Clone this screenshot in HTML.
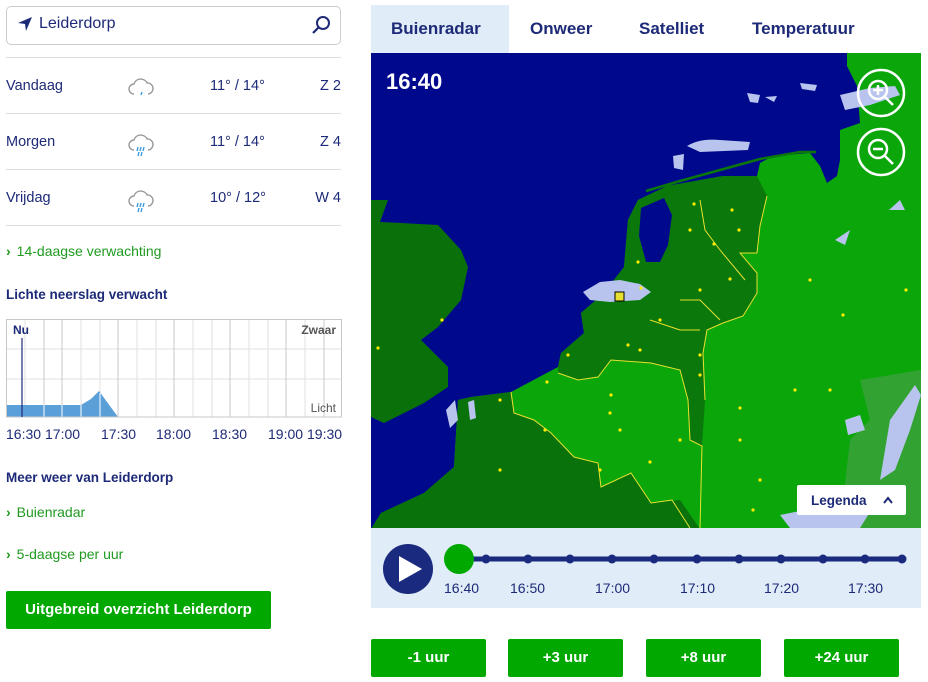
<!DOCTYPE html>
<html><head><meta charset="utf-8"><style>
*{box-sizing:border-box;margin:0;padding:0}
body{width:928px;height:682px;background:#fff;font-family:"Liberation Sans",sans-serif;color:#1d2a78;position:relative;overflow:hidden}
.a{position:absolute}
.row{position:absolute;left:6px;width:335px;height:56px;border-top:1px solid #ddd;font-size:14.5px}
.row span{position:absolute;top:20px}
.lnk{color:#1f9a1f;font-size:14px}
.lnk b{font-weight:bold;margin-right:6px}
.h{font-weight:bold;font-size:13.5px}
.tab{position:absolute;top:5px;height:48px;line-height:48px;font-weight:bold;font-size:17px;color:#1d2a78}
.btn{position:absolute;top:639px;height:38px;background:#00a800;color:#fff;font-weight:bold;font-size:15px;text-align:center;line-height:38px;border-radius:2px;width:115px}
.tl{position:absolute;top:580px;font-size:14px;color:#1d2a78}
.cl{position:absolute;top:426px;font-size:14px}
</style></head><body>
<div class="a" style="left:6px;top:6px;width:335px;height:39px;border:1px solid #ccc;border-radius:5px"></div>
<svg class="a" style="left:17px;top:16px" width="16" height="16" viewBox="0 0 16 16"><path d="M15 1 L1 7 L8 8 L9 15 Z" fill="#1d2a78"/></svg>
<div class="a" style="left:39px;top:15px;font-size:16px">Leiderdorp</div>
<svg class="a" style="left:311px;top:15px" width="20" height="20" viewBox="0 0 20 20"><circle cx="12" cy="8" r="6" fill="none" stroke="#1d2a78" stroke-width="2"/><path d="M7.5 12.5 L2 18" stroke="#1d2a78" stroke-width="2.2"/></svg>

<div class="row" style="top:57px"><span style="left:0">Vandaag</span><span style="left:204px">11° / 14°</span><span style="right:0">Z 2</span></div>
<div class="row" style="top:113px"><span style="left:0">Morgen</span><span style="left:204px">11° / 14°</span><span style="right:0">Z 4</span></div>
<div class="row" style="top:169px"><span style="left:0">Vrijdag</span><span style="left:204px">10° / 12°</span><span style="right:0">W 4</span></div>
<div class="a" style="left:6px;top:225px;width:335px;border-top:1px solid #ddd"></div>
<svg class="a" style="left:128px;top:76px" width="26" height="140" viewBox="0 0 26 140">
<g fill="none" stroke="#999" stroke-width="1.4">
<path d="M6 18 A5 5 0 0 1 6 8 A7 7 0 0 1 19 7 A5 5 0 0 1 20 18"/>
<path d="M6 74 A5 5 0 0 1 6 64 A7 7 0 0 1 19 63 A5 5 0 0 1 20 74"/>
<path d="M6 130 A5 5 0 0 1 6 120 A7 7 0 0 1 19 119 A5 5 0 0 1 20 130"/></g>
<g stroke="#3a9be0" stroke-width="1.4"><path d="M14 16 L13 19"/><path d="M10 71 L9 75 M13 71 L12 75 M16 71 L15 75 M11 76 L10 80 M14 76 L13 80"/><path d="M10 127 L9 131 M13 127 L12 131 M16 127 L15 131 M11 132 L10 136 M14 132 L13 136"/></g></svg>

<div class="a lnk" style="left:6px;top:243px"><b>›</b>14-daagse verwachting</div>
<div class="a h" style="left:6px;top:287px">Lichte neerslag verwacht</div>
<svg class="a" style="left:6px;top:319px" width="336" height="100" viewBox="0 0 336 100">
<g stroke="#e2e2e2" stroke-width="1">
<line x1="0" y1="30" x2="336" y2="30"/><line x1="0" y1="60" x2="336" y2="60"/>
<line x1="19" y1="0" x2="19" y2="98"/><line x1="75" y1="0" x2="75" y2="98"/><line x1="94" y1="0" x2="94" y2="98"/><line x1="131" y1="0" x2="131" y2="98"/><line x1="150" y1="0" x2="150" y2="98"/><line x1="187" y1="0" x2="187" y2="98"/><line x1="206" y1="0" x2="206" y2="98"/><line x1="243" y1="0" x2="243" y2="98"/><line x1="262" y1="0" x2="262" y2="98"/><line x1="299" y1="0" x2="299" y2="98"/></g>
<g stroke="#c8c8c8" stroke-width="1"><line x1="38" y1="0" x2="38" y2="98"/><line x1="56" y1="0" x2="56" y2="98"/><line x1="112" y1="0" x2="112" y2="98"/><line x1="168" y1="0" x2="168" y2="98"/><line x1="224" y1="0" x2="224" y2="98"/><line x1="280" y1="0" x2="280" y2="98"/><line x1="318" y1="0" x2="318" y2="98"/></g>
<path d="M0 86 L75 86 L85 80 L93 72 L112 98 L0 98Z" fill="#5a9fd8"/>
<g stroke="#fff" stroke-width="1"><line x1="38" y1="86" x2="38" y2="98"/><line x1="56" y1="86" x2="56" y2="98"/><line x1="75" y1="86" x2="75" y2="98"/><line x1="94" y1="74" x2="94" y2="98"/></g>
<rect x="0.5" y="0.5" width="335" height="97.5" fill="none" stroke="#c8c8c8"/>
<line x1="16" y1="19" x2="16" y2="98" stroke="#1d2a78" stroke-width="1.2"/>
<text x="7" y="15" font-family="Liberation Sans" font-weight="bold" font-size="12" fill="#1d2a78">Nu</text>
<text x="330" y="15" text-anchor="end" font-family="Liberation Sans" font-weight="bold" font-size="12" fill="#555">Zwaar</text>
<text x="330" y="93" text-anchor="end" font-family="Liberation Sans" font-size="12" fill="#555">Licht</text>
</svg>
<div class="cl" style="left:6px">16:30</div><div class="cl" style="left:45px">17:00</div><div class="cl" style="left:101px">17:30</div><div class="cl" style="left:156px">18:00</div><div class="cl" style="left:212px">18:30</div><div class="cl" style="left:268px">19:00</div><div class="cl" style="left:307px">19:30</div>

<div class="a h" style="left:6px;top:470px">Meer weer van Leiderdorp</div>
<div class="a lnk" style="left:6px;top:504px"><b>›</b>Buienradar</div>
<div class="a lnk" style="left:6px;top:546px"><b>›</b>5-daagse per uur</div>
<div class="a" style="left:6px;top:591px;width:265px;height:38px;background:#00a800;color:#fff;font-weight:bold;font-size:15px;line-height:38px;text-align:center;border-radius:2px">Uitgebreid overzicht Leiderdorp</div>

<div class="a" style="left:371px;top:5px;width:138px;height:48px;background:#e0ecf7"></div>
<div class="tab" style="left:391px">Buienradar</div><div class="tab" style="left:530px">Onweer</div><div class="tab" style="left:639px">Satelliet</div><div class="tab" style="left:752px">Temperatuur</div>

<svg class="a" style="left:371px;top:53px" width="550" height="475" viewBox="371 53 550 475">
<rect x="371" y="53" width="550" height="475" fill="#00088c"/>
<path d="M371 200 L388 200 L380 222 L401 223 L438 225 L461 250 L468 267 L461 300 L438 327 L421 340 L448 367 L448 387 L424 403 L384 423 L371 417Z" fill="#0a700a"/>
<path d="M371 529 L381 513 L424 493 L454 467 L458 400 L471 397 L511 392 L558 367 L561 353 L584 333 L581 313 L604 293 L624 267 L628 220 L638 200 L667 186 L723 176 L757 176 L760 163 L773 156 L810 153 L820 166 L827 183 L837 176 L840 160 L840 130 L860 123 L857 86 L847 66 L847 53 L921 53 L921 529Z" fill="#0aa60a"/>
<path d="M604 293 L624 267 L628 220 L638 200 L667 186 L723 176 L757 176 L767 196 L760 226 L757 253 L740 253 L757 273 L757 293 L743 316 L723 323 L707 330 L703 353 L705 400 L702 446 L690 440 L688 400 L680 370 L651 363 L611 360 L598 377 L578 380 L558 373 L558 367 L561 353 L584 333 L581 313Z" fill="#0a780a"/>
<path d="M371 529 L381 513 L424 493 L454 467 L458 400 L471 397 L511 392 L514 413 L534 420 L551 433 L574 457 L598 463 L601 487 L631 473 L651 503 L680 500 L700 529Z" fill="#0a720a"/>
<path d="M641 208 L664 198 L672 215 L668 245 L660 262 L646 262 L639 236Z" fill="#00088c"/>
<polyline points="646,191 680,181 720,170 760,159 800,152 816,152" fill="none" stroke="#0a780a" stroke-width="2.5"/>
<path d="M860 380 L921 370 L921 528 L840 528 L850 440 L870 420Z" fill="#5a9e5a" opacity="0.5"/>
<g fill="#b8c4ee"><path d="M687 146 Q700 138 720 140 L750 142 L748 150 L700 152 Z"/><path d="M673 156 L684 154 L683 170 L674 168Z"/><path d="M747 93 L760 95 L758 103 L750 102Z"/><path d="M765 97 L777 96 L774 102Z"/><path d="M800 83 L817 85 L815 91 L802 89Z"/><path d="M840 95 L870 88 L895 86 L900 95 L870 105 L845 110Z"/><path d="M583 292 L600 282 L620 280 L640 284 L651 292 L640 300 L610 302 L590 300Z"/><path d="M446 410 L455 400 L458 420 L450 428Z M468 402 L474 400 L476 418 L470 420Z"/><path d="M890 420 L915 385 L921 395 L910 430 L895 470 L880 480Z"/><path d="M845 420 L860 415 L865 430 L848 435Z"/><path d="M780 515 L830 505 L870 512 L860 528 L790 528Z"/><path d="M889 210 L900 200 L905 210Z M835 240 L850 230 L845 245Z"/></g>
<g fill="none" stroke="#e8e030" stroke-width="1"><path d="M511 392 L514 413 L534 420 L551 433 L574 457 L598 463 L601 487 L631 473 L651 503 L672 500 L690 528"/><path d="M558 373 L578 380 L598 377 L611 360 L651 363 L680 370 L688 400 L690 440 L702 446 L700 528"/><path d="M767 196 L760 226 L757 253 L740 253 L757 273 L757 293 L743 316 L723 323 L707 330 L703 353 L705 400"/><path d="M700 200 L705 230 L720 250 L745 280 M680 300 L700 300 L720 320 M650 320 L680 330 L700 330"/></g>
<g fill="#ffee00"><circle cx="442" cy="320" r="1.6"/><circle cx="378" cy="348" r="1.6"/><circle cx="640" cy="350" r="1.6"/><circle cx="700" cy="355" r="1.6"/><circle cx="694" cy="204" r="1.6"/><circle cx="732" cy="210" r="1.6"/><circle cx="690" cy="230" r="1.6"/><circle cx="714" cy="244" r="1.6"/><circle cx="730" cy="279" r="1.6"/><circle cx="700" cy="290" r="1.6"/><circle cx="620" cy="430" r="1.6"/><circle cx="680" cy="440" r="1.6"/><circle cx="600" cy="470" r="1.6"/><circle cx="760" cy="480" r="1.6"/><circle cx="795" cy="390" r="1.6"/><circle cx="843" cy="315" r="1.6"/><circle cx="660" cy="320" r="1.6"/><circle cx="545" cy="430" r="1.6"/><circle cx="500" cy="470" r="1.6"/><circle cx="638" cy="262" r="1.6"/><circle cx="641" cy="288" r="1.6"/><circle cx="628" cy="345" r="1.6"/><circle cx="568" cy="355" r="1.6"/><circle cx="547" cy="382" r="1.6"/><circle cx="611" cy="395" r="1.6"/><circle cx="610" cy="413" r="1.6"/><circle cx="650" cy="462" r="1.6"/><circle cx="739" cy="230" r="1.6"/><circle cx="700" cy="375" r="1.6"/><circle cx="740" cy="408" r="1.6"/><circle cx="810" cy="280" r="1.6"/><circle cx="906" cy="290" r="1.6"/><circle cx="830" cy="390" r="1.6"/><circle cx="740" cy="440" r="1.6"/><circle cx="753" cy="510" r="1.6"/><circle cx="500" cy="400" r="1.6"/></g>
<rect x="615" y="292" width="9" height="9" fill="#e8e030" stroke="#000" stroke-width="1"/>
<g fill="none" stroke="#fff" stroke-width="2.5"><circle cx="881" cy="93" r="23"/><circle cx="881" cy="152" r="23"/><circle cx="878" cy="90" r="9"/><circle cx="878" cy="149" r="9"/><path d="M885 97 L893 105 M885 156 L893 164 M873 90 L883 90 M878 85 L878 95 M873 149 L883 149"/></g>
<text x="386" y="89" font-family="Liberation Sans" font-weight="bold" font-size="22" fill="#fff">16:40</text>
<rect x="797" y="485" width="109" height="30" rx="2" fill="#fff"/>
<text x="811" y="505" font-family="Liberation Sans" font-weight="bold" font-size="13.5" fill="#1d2a78">Legenda</text>
<path d="M884 503 L888 498 L892 503" fill="none" stroke="#1d2a78" stroke-width="2"/>
</svg>
<div class="a" style="left:371px;top:528px;width:550px;height:80px;background:#e0ecf7"></div>
<svg class="a" style="left:371px;top:528px" width="550" height="80" viewBox="0 0 550 80">
<circle cx="37" cy="41" r="25" fill="#1a2a7e"/><path d="M28 28 L51 41 L28 54Z" fill="#fff"/>
<line x1="88" y1="31" x2="531" y2="31" stroke="#1a2a7e" stroke-width="5"/>
<g fill="#1a2a7e"><circle cx="115" cy="31" r="4.5"/><circle cx="157" cy="31" r="4.5"/><circle cx="199" cy="31" r="4.5"/><circle cx="241" cy="31" r="4.5"/><circle cx="283" cy="31" r="4.5"/><circle cx="326" cy="31" r="4.5"/><circle cx="368" cy="31" r="4.5"/><circle cx="410" cy="31" r="4.5"/><circle cx="452" cy="31" r="4.5"/><circle cx="494" cy="31" r="4.5"/><circle cx="531" cy="31" r="4.5"/></g>
<circle cx="88" cy="31" r="15" fill="#00a800"/>
</svg>
<div class="tl" style="left:444px">16:40</div><div class="tl" style="left:510px">16:50</div><div class="tl" style="left:595px">17:00</div><div class="tl" style="left:680px">17:10</div><div class="tl" style="left:764px">17:20</div><div class="tl" style="left:848px">17:30</div>

<div class="btn" style="left:371px">-1 uur</div><div class="btn" style="left:508px">+3 uur</div><div class="btn" style="left:646px">+8 uur</div><div class="btn" style="left:784px">+24 uur</div>
</body></html>
